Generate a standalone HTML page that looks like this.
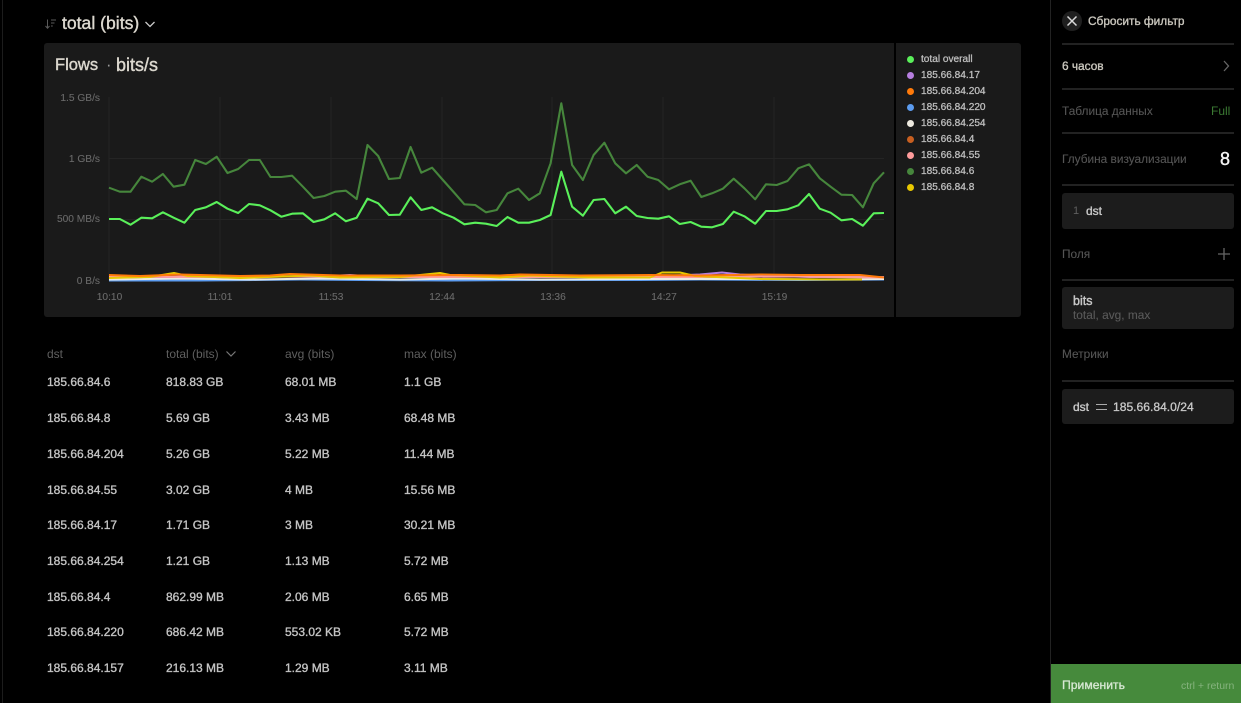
<!DOCTYPE html>
<html lang="ru">
<head>
<meta charset="utf-8">
<title>Flows</title>
<style>
html,body{margin:0;padding:0;background:#000;}
body{position:relative;width:1241px;height:703px;overflow:hidden;font-family:"Liberation Sans","Noto Sans CJK SC",sans-serif;color:#ccc;}
.a{position:absolute;}
.t{position:absolute;white-space:nowrap;line-height:14px;}
.c{font-size:12px;color:#c4c4c4;-webkit-text-stroke:.35px #c4c4c4;}
.h{font-size:12px;color:#5f5f5f;}
.y{font-size:10.2px;color:#6a6a6a;text-align:right;width:60px;left:40px;-webkit-text-stroke:.1px #6a6a6a;}
.x{font-size:10.2px;color:#6a6a6a;text-align:center;width:50px;top:291px;-webkit-text-stroke:.1px #6a6a6a;}
.l{font-size:10.100px;color:#bdbdbd;left:921px;-webkit-text-stroke:.3px #bdbdbd;}
.d{position:absolute;left:907px;width:7px;height:7px;border-radius:50%;}
.s{position:absolute;left:1062px;width:172px;height:1.5px;background:#222;}
.b{position:absolute;left:1062px;width:172px;background:#1c1c1c;border-radius:3px;}
.m{font-size:11.850px;color:#555;left:1062px;-webkit-text-stroke:.1px #555;}
.w{font-size:11.850px;color:#c9c6bd;-webkit-text-stroke:.35px #c9c6bd;}
</style>
</head>
<body>
<div class="a" style="left:1.500px;top:0;width:1.5px;height:703px;background:#1c1c1c"></div>
<div class="a" style="left:1049.500px;top:0;width:1.5px;height:703px;background:#222"></div>

<svg class="a" style="left:44px;top:17px" width="14" height="14" viewBox="0 0 14 14" fill="none" stroke="#5a5a5a" stroke-width="1"><path d="M3.5 2.5V11M1.500 9l2 2.200L5.500 9M7 3h5M7 6h3.500M7 9h1.800"/></svg>
<div class="t" style="left:62px;top:15px;font-size:17.600px;line-height:16px;color:#dcd8cf;-webkit-text-stroke:.4px #dcd8cf">total (bits)</div>
<svg class="a" style="left:144px;top:18px" width="12" height="12" viewBox="0 0 12 12" fill="none" stroke="#c9c9c9" stroke-width="1.300"><path d="M1.500 4l4.500 4.500L10.500 4"/></svg>

<div class="a" style="left:44px;top:43px;width:850px;height:274px;background:#1a1a1a;border-radius:3px 0 0 3px"></div>
<div class="a" style="left:896px;top:43px;width:125px;height:274px;background:#1a1a1a;border-radius:0 3px 3px 0"></div>
<div class="t" style="left:55px;top:57px;font-size:16.500px;line-height:17px;color:#dcd8cf;-webkit-text-stroke:.4px #dcd8cf">Flows</div>
<div class="t" style="left:106px;top:57px;font-size:16.500px;line-height:17px;color:#9a9a9a">·</div>
<div class="t" style="left:116px;top:57px;font-size:18px;line-height:17px;color:#dcd8cf;-webkit-text-stroke:.4px #dcd8cf">bits/s</div>

<div class="t y" style="top:91.500px">1.5 GB/s</div>
<div class="t y" style="top:152.500px">1 GB/s</div>
<div class="t y" style="top:213px">500 MB/s</div>
<div class="t y" style="top:274.500px">0 B/s</div>
<div class="t x" style="left:84.500px">10:10</div>
<div class="t x" style="left:195px">11:01</div>
<div class="t x" style="left:306px">11:53</div>
<div class="t x" style="left:417px">12:44</div>
<div class="t x" style="left:528px">13:36</div>
<div class="t x" style="left:639px">14:27</div>
<div class="t x" style="left:749.500px">15:19</div>

<svg class="a" style="left:0;top:0" width="1241" height="703" viewBox="0 0 1241 703" fill="none">
<g stroke="#242424" stroke-width="1">
<path d="M109 97V281M220 97V281M331 97V281M442 97V281M552 97V281M663 97V281M774 97V281"/>
<path d="M109 158.500H884M109 219.500H884"/>
</g>
<polyline stroke="#46863c" stroke-width="2.100" stroke-linejoin="round" points="109,187.700 119.800,191.700 130.500,191.700 141.300,176.700 152.100,181.700 162.900,174 173.600,186.700 184.400,184.700 195.200,160 205.900,164 216.700,156.700 227.500,173 238.200,169 249,160 259.800,160 270.500,177 281.300,177 292.100,175.700 302.900,186.700 313.600,198 324.400,196 335.200,191.700 345.900,190.700 356.700,199 367.500,145 378.200,156 389,179 399.800,178 410.600,147 421.300,172.700 432.100,167.700 442.900,180 453.600,192 464.400,204.300 475.200,205 485.900,212.300 496.700,210 507.500,193.300 518.300,188.700 529,200 539.800,193.300 550.600,163.300 561.300,103.300 572.100,165 582.900,180 593.600,155 604.400,142.700 615.200,163.300 626,173.300 636.700,165 647.500,176.700 658.300,180 669,189.300 679.800,184.300 690.600,180.700 701.300,197 712.100,193.300 722.900,188.700 733.700,178.700 744.400,188.300 755.200,199.300 766,184.300 776.700,185 787.500,181 798.300,168.300 809,164.300 819.800,178.300 830.600,186.700 841.400,194.700 852.100,195 862.900,207.300 873.700,183.300 884,172.300"/>
<g stroke-width="2" stroke-linejoin="round">
<polyline stroke="#5c9cf0" points="109,280.500 200,280.500 300,279.500 360,280 450,280.500 540,280 640,280 700,279.500 800,280 884,279.500"/>
<polyline stroke="#eeeae0" points="109,279.500 180,278.500 250,279.500 320,278.500 400,279.500 460,278.500 540,279.500 640,279 740,279 820,279.500 884,279"/>
<polyline stroke="#b77fe0" points="109,277 170,277 190,276 240,276 320,276.500 350,275 380,277 430,277 470,275.500 520,277 600,277 660,276 700,274.500 722,272.500 740,274.500 760,275.500 810,277 884,277"/>
<polyline stroke="#ff9c9c" points="109,276.500 200,277 300,276.500 400,277 500,277 600,277 700,277 800,276.500 884,277.500"/>
<polyline stroke="#e8c800" points="109,278 150,277 162,275 174,273 188,276 240,278 310,275.500 340,277.500 400,277 430,274 440,273 450,275 500,277.500 530,275.500 590,277.500 650,277.500 662,272.500 680,272.500 695,276 760,279 830,279.500 862,279.500"/>
<polyline stroke="#ff7a0a" points="109,275 140,276 180,274.500 240,276 270,275.500 290,274 340,275.500 400,275.500 460,275 500,275.500 520,274.500 580,275.500 650,275 700,275.500 760,274.500 800,275 860,275 884,277.500"/>
</g>
<polyline stroke="#5af05a" stroke-width="2.100" stroke-linejoin="round" points="109,219 119.800,219 130.500,224.700 141.300,217.700 152.100,218.300 162.900,212.300 173.600,217.700 184.400,222.700 195.200,210 205.900,207.300 216.700,202 227.500,208.700 238.200,213 249,204 259.800,205.300 270.500,210.300 281.300,216.700 292.100,213.700 302.900,213.300 313.600,222 324.400,219.300 335.200,213.300 345.900,221.300 356.700,217.700 367.500,198.700 378.200,203.300 389,215 399.800,214.700 410.600,197.300 421.300,210 432.100,207.300 442.900,213.300 453.600,217.700 464.400,224.300 475.200,222.700 485.900,223.700 496.700,226 507.500,217 518.300,222.700 529,222.700 539.800,220 550.600,215 561.300,171.700 572.100,206.700 582.900,215.700 593.600,200 604.400,199 615.200,213.300 626,206.700 636.700,216 647.500,218 658.300,218.700 669,216.300 679.800,224 690.600,222 701.300,226.700 712.100,227.300 722.900,224 733.700,211.700 744.400,216.300 755.200,223.700 766,211 776.700,211 787.500,209.300 798.300,205.300 809,194 819.800,208.700 830.600,212.700 841.400,220.300 852.100,219 862.900,225.700 873.700,213.300 884,213"/>
</svg>

<span class="d" style="top:56px;background:#5af05a"></span><div class="t l" style="top:53px">total overall</div>
<span class="d" style="top:72px;background:#b77fe0"></span><div class="t l" style="top:69px">185.66.84.17</div>
<span class="d" style="top:88px;background:#ff7a0a"></span><div class="t l" style="top:85px">185.66.84.204</div>
<span class="d" style="top:104px;background:#5c9cf0"></span><div class="t l" style="top:101px">185.66.84.220</div>
<span class="d" style="top:120px;background:#eeeae0"></span><div class="t l" style="top:117px">185.66.84.254</div>
<span class="d" style="top:136px;background:#c85f20"></span><div class="t l" style="top:133px">185.66.84.4</div>
<span class="d" style="top:152px;background:#ff9c9c"></span><div class="t l" style="top:149px">185.66.84.55</div>
<span class="d" style="top:168px;background:#46863c"></span><div class="t l" style="top:165px">185.66.84.6</div>
<span class="d" style="top:184px;background:#e8c800"></span><div class="t l" style="top:181px">185.66.84.8</div>

<div class="t h" style="left:47px;top:347px">dst</div>
<div class="t h" style="left:166px;top:347px">total (bits)</div>
<svg class="a" style="left:225px;top:349px" width="12" height="10" viewBox="0 0 12 10" fill="none" stroke="#777" stroke-width="1.200"><path d="M1.500 2.500L6 7l4.500-4.500"/></svg>
<div class="t h" style="left:285px;top:347px">avg (bits)</div>
<div class="t h" style="left:404px;top:347px">max (bits)</div>

<div class="t c" style="left:47px;top:375px">185.66.84.6</div><div class="t c" style="left:166px;top:375px">818.83 GB</div><div class="t c" style="left:285px;top:375px">68.01 MB</div><div class="t c" style="left:404px;top:375px">1.1 GB</div>
<div class="t c" style="left:47px;top:411px">185.66.84.8</div><div class="t c" style="left:166px;top:411px">5.69 GB</div><div class="t c" style="left:285px;top:411px">3.43 MB</div><div class="t c" style="left:404px;top:411px">68.48 MB</div>
<div class="t c" style="left:47px;top:447px">185.66.84.204</div><div class="t c" style="left:166px;top:447px">5.26 GB</div><div class="t c" style="left:285px;top:447px">5.22 MB</div><div class="t c" style="left:404px;top:447px">11.44 MB</div>
<div class="t c" style="left:47px;top:483px">185.66.84.55</div><div class="t c" style="left:166px;top:483px">3.02 GB</div><div class="t c" style="left:285px;top:483px">4 MB</div><div class="t c" style="left:404px;top:483px">15.56 MB</div>
<div class="t c" style="left:47px;top:518px">185.66.84.17</div><div class="t c" style="left:166px;top:518px">1.71 GB</div><div class="t c" style="left:285px;top:518px">3 MB</div><div class="t c" style="left:404px;top:518px">30.21 MB</div>
<div class="t c" style="left:47px;top:554px">185.66.84.254</div><div class="t c" style="left:166px;top:554px">1.21 GB</div><div class="t c" style="left:285px;top:554px">1.13 MB</div><div class="t c" style="left:404px;top:554px">5.72 MB</div>
<div class="t c" style="left:47px;top:590px">185.66.84.4</div><div class="t c" style="left:166px;top:590px">862.99 MB</div><div class="t c" style="left:285px;top:590px">2.06 MB</div><div class="t c" style="left:404px;top:590px">6.65 MB</div>
<div class="t c" style="left:47px;top:625px">185.66.84.220</div><div class="t c" style="left:166px;top:625px">686.42 MB</div><div class="t c" style="left:285px;top:625px">553.02 KB</div><div class="t c" style="left:404px;top:625px">5.72 MB</div>
<div class="t c" style="left:47px;top:661px">185.66.84.157</div><div class="t c" style="left:166px;top:661px">216.13 MB</div><div class="t c" style="left:285px;top:661px">1.29 MB</div><div class="t c" style="left:404px;top:661px">3.11 MB</div>

<div class="a" style="left:1062px;top:11px;width:20px;height:20px;border-radius:50%;background:#1f1f1f"></div>
<svg class="a" style="left:1062px;top:11px" width="20" height="20" viewBox="0 0 20 20" fill="none" stroke="#d8d8d8" stroke-width="1.500"><path d="M5.500 5.500l9 9M14.500 5.500l-9 9"/></svg>
<div class="t w" style="left:1088px;top:14px">Сбросить фильтр</div>
<div class="s" style="top:43px"></div>
<div class="t w" style="left:1062px;top:59px">6 часов</div>
<svg class="a" style="left:1221px;top:60px" width="10" height="12" viewBox="0 0 10 12" fill="none" stroke="#666" stroke-width="1.300"><path d="M3 1l4.500 5L3 11"/></svg>
<div class="s" style="top:88px"></div>
<div class="t m" style="top:104px">Таблица данных</div>
<div class="t" style="left:1211px;top:104px;font-size:12px;color:#3b7a33">Full</div>
<div class="s" style="top:132px"></div>
<div class="t m" style="top:152px">Глубина визуализации</div>
<div class="t" style="left:1220px;top:152px;font-size:18px;color:#f2f2f2;-webkit-text-stroke:.4px #f2f2f2">8</div>
<div class="s" style="top:184px"></div>
<div class="b" style="top:193px;height:36px"></div>
<div class="t" style="left:1073px;top:204px;font-size:11px;color:#5f5f5f">1</div>
<div class="t" style="left:1086px;top:204px;font-size:12px;color:#c9c9c9;-webkit-text-stroke:.35px #c9c9c9">dst</div>
<div class="t m" style="top:246.500px">Поля</div>
<svg class="a" style="left:1217px;top:247px" width="14" height="14" viewBox="0 0 14 14" fill="none" stroke="#666" stroke-width="1.300"><path d="M7 1v12M1 7h12"/></svg>
<div class="s" style="top:279px"></div>
<div class="b" style="top:287px;height:42px"></div>
<div class="t" style="left:1073px;top:294px;font-size:12.500px;color:#c9c9c9;-webkit-text-stroke:.4px #c9c9c9">bits</div>
<div class="t" style="left:1073px;top:308px;font-size:11.900px;color:#5a5a5a;-webkit-text-stroke:.1px #5a5a5a">total, avg, max</div>
<div class="t m" style="top:347px">Метрики</div>
<div class="s" style="top:380px"></div>
<div class="b" style="top:389px;height:35px"></div>
<div class="t" style="left:1073px;top:399.500px;font-size:12px;color:#c9c9c9;-webkit-text-stroke:.35px #c9c9c9">dst</div>
<svg class="a" style="left:1095px;top:401px" width="13" height="12" viewBox="0 0 13 12" fill="none" stroke="#aaa" stroke-width="1.100"><path d="M1 3.500h11M1 8.500h11"/></svg>
<div class="t" style="left:1113px;top:399.500px;font-size:12.100px;color:#c9c9c9;-webkit-text-stroke:.3px #c9c9c9">185.66.84.0/24</div>

<div class="a" style="left:1051px;top:664px;width:190px;height:39px;background:#468a3c"></div>
<div class="t" style="left:1062px;top:678px;font-size:12.200px;color:#d8e8d4;-webkit-text-stroke:.3px #d8e8d4">Применить</div>
<div class="t" style="left:1181px;top:679px;font-size:10.500px;color:#86b47e">ctrl + return</div>
</body>
</html>
